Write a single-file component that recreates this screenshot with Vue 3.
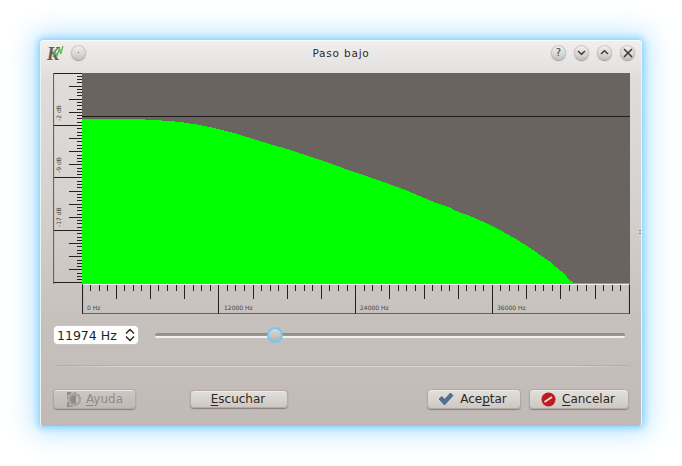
<script setup>
import { computed } from 'vue'

const hz = 11974
const maxHz = 47000
const handleLeft = computed(() => (hz / maxHz) * 100 + '%')

// Samples of the response curve, in chart coordinates (x from 82, y from 73)
const samples = [[0,46],[50,46],[80,47.5],[108,50.5],[148,59],[188,71],[218,80.5],[268,97.5],[318,115],[368,134.5],[388,143],[408,152],[428,162.7],[448,175],[468,188.7],[481,199.7],[491.5,209.7]]
function smooth(pts) {
  const out = []
  for (let i = 0; i < pts.length - 1; i++) {
    const p0 = pts[Math.max(i - 1, 0)]
    const p1 = pts[i]
    const p2 = pts[i + 1]
    const p3 = pts[Math.min(i + 2, pts.length - 1)]
    const n = Math.max(1, Math.round(p2[0] - p1[0]))
    for (let k = 0; k < n; k++) {
      const t = k / n
      const h = (a, b, c, d) => 0.5 * (2 * b + (c - a) * t + (2 * a - 5 * b + 4 * c - d) * t * t + (3 * b - a - 3 * c + d) * t * t * t)
      out.push([p1[0] + (p2[0] - p1[0]) * t, Math.max(46, h(p0[1], p1[1], p2[1], p3[1]))])
    }
  }
  out.push(pts[pts.length - 1])
  return out
}
const curvePoints = smooth(samples).concat([[548, 209.7], [548, 211], [0, 211]]).map(p => `${p[0]},${p[1].toFixed(1)}`).join(' ')

const leftTicks = []
for (let i = 0; i <= 64; i++) {
  const y = Math.floor(i * 3.281) + 0.5
  if (i % 16 === 0) leftTicks.push({ y, x1: 1, w: 1.2 })
  else if (i % 4 === 0) leftTicks.push({ y, x1: 16, w: 1 })
  else leftTicks.push({ y, x1: 23.5, w: 1 })
}
const leftLabels = [{ y: 48, t: '-2 dB' }, { y: 100, t: '-9 dB' }, { y: 154, t: '-17 dB' }]

const bottomTicks = []
for (let i = 0; i <= 64; i++) {
  const x = Math.floor(i * 8.55) + 0.5
  if (i % 16 === 0) bottomTicks.push({ x, h: 29 })
  else if (i % 4 === 0) bottomTicks.push({ x, h: 14 })
  else bottomTicks.push({ x, h: 6 })
}
const bottomLabels = [{ x: 5, t: '0 Hz' }, { x: 142, t: '12000 Hz' }, { x: 278, t: '24000 Hz' }, { x: 415, t: '36000 Hz' }]
</script>

<template>
  <div class="desktop">
    <div class="window">
      <header class="titlebar">
        <div class="tb-left">
          <span class="logo">
            <span class="logo-k">K</span>
            <svg class="logo-wave" width="12" height="14" viewBox="0 0 12 14">
              <path d="M1 12 L3 6 L5 11 L7.5 3 L8.5 9 L11 1" fill="none" stroke="#67b657" stroke-width="1.4" />
            </svg>
          </span>
          <span class="tb-btn"><span class="pin"></span></span>
        </div>
        <div class="title">Paso bajo</div>
        <div class="tb-right">
          <span class="tb-btn"><span class="help">?</span></span>
          <span class="tb-btn">
            <svg width="9" height="9" viewBox="0 0 9 9"><path d="M1 3 L4.5 6.2 L8 3" fill="none" stroke="#3c3a38" stroke-width="1.5" /></svg>
          </span>
          <span class="tb-btn">
            <svg width="9" height="9" viewBox="0 0 9 9"><path d="M1 6 L4.5 2.8 L8 6" fill="none" stroke="#3c3a38" stroke-width="1.5" /></svg>
          </span>
          <span class="tb-btn">
            <svg width="10" height="10" viewBox="0 0 10 10"><path d="M1 1 L9 9 M9 1 L1 9" fill="none" stroke="#3c3a38" stroke-width="1.6" /></svg>
          </span>
        </div>
      </header>

      <main class="content">
        <div class="chart">
          <svg class="ruler-left" width="29" height="211" viewBox="0 0 29 211">
            <line x1="0.5" y1="0" x2="0.5" y2="211" stroke="#6a6460" stroke-width="1.2" />
            <line v-for="t in leftTicks" :key="t.y" :x1="t.x1" :y1="t.y" x2="29" :y2="t.y" stroke="#24211f" :stroke-width="t.w" shape-rendering="crispEdges" />
            <text v-for="l in leftLabels" :key="l.t" class="tiny" :transform="`translate(8 ${l.y}) rotate(-90)`">{{ l.t }}</text>
          </svg>
          <svg class="plot" width="548" height="211" viewBox="0 0 548 211">
            <rect width="548" height="211" fill="#6a6460" />
            <polygon :points="curvePoints" fill="#00ff00" shape-rendering="crispEdges" />
            <line x1="0" y1="43.5" x2="548" y2="43.5" stroke="#1f1c1a" shape-rendering="crispEdges" />
          </svg>
          <svg class="ruler-bottom" width="548" height="30" viewBox="0 0 548 30">
            <line x1="0" y1="0.5" x2="548" y2="0.5" stroke="#f4f2f0" />
            <path d="M0.5 0 V29.5 H547.5 V0" fill="none" stroke="#6a6460" stroke-width="1.2" />
            <line v-for="t in bottomTicks" :key="t.x" :x1="t.x" y1="1" :x2="t.x" :y2="1 + t.h" stroke="#24211f" shape-rendering="crispEdges" />
            <text v-for="l in bottomLabels" :key="l.t" class="tiny" :x="l.x" y="26">{{ l.t }}</text>
          </svg>
        </div>

        <div class="control-row">
          <div class="spin">
            <span>{{ hz }} Hz</span>
            <svg width="12" height="14" viewBox="0 0 12 14">
              <path d="M2 5.5 L6 1.5 L10 5.5 M2 8.5 L6 12.5 L10 8.5" fill="none" stroke="#2b2826" stroke-width="1.5" />
            </svg>
          </div>
          <div class="slider">
            <div class="groove"></div>
            <div class="handle" :style="{ left: handleLeft }"></div>
          </div>
        </div>

        <div class="separator"></div>

        <footer class="buttons">
          <button class="btn disabled ayuda" disabled>
            <svg width="17" height="17" viewBox="0 0 17 17">
              <rect x="1" y="1" width="9" height="15" fill="#8f8a86" />
              <circle cx="8.5" cy="8.5" r="5.5" fill="none" stroke="#a8a4a0" stroke-width="3" />
              <circle cx="8.5" cy="8.5" r="7.2" fill="none" stroke="#d2cecb" stroke-width="1" stroke-dasharray="3 2" />
            </svg>
            <span><u>A</u>yuda</span>
          </button>
          <button class="btn escuchar"><span><u>E</u>scuchar</span></button>
          <span class="spacer"></span>
          <button class="btn aceptar">
            <svg width="16" height="14" viewBox="0 0 16 14">
              <path d="M1 7 L4 4.5 L6.5 7.5 L12.5 1 L15 3.5 L6.5 13 Z" fill="#4f7296" stroke="#3a5674" stroke-width="0.7" />
            </svg>
            <span>Ace<u>p</u>tar</span>
          </button>
          <button class="btn cancelar">
            <svg width="15" height="15" viewBox="0 0 15 15">
              <circle cx="7.5" cy="7.5" r="7" fill="#bb1c1e" />
              <path d="M3.5 10 L11 5" stroke="#f2d8d8" stroke-width="2" />
            </svg>
            <span><u>C</u>ancelar</span>
          </button>
        </footer>
      </main>
      <span class="grip"></span>
    </div>
  </div>
</template>

<style>
html, body { background: #ffffff; }
</style>

<style scoped>
.desktop {
  box-sizing: border-box;
  width: 682px;
  height: 466px;
  padding: 40px 0 0 40px;
  overflow: hidden;
}
.window {
  position: relative;
  box-sizing: border-box;
  width: 602px;
  height: 386px;
  border-radius: 4px 4px 3px 3px;
  border-top: 1px solid #fbfbfb;
  border-left: 1px solid #f2f1f0;
  border-right: 1px solid #f4f3f2;
  background: linear-gradient(180deg, #f0efed 0%, #dfdddb 10%, #d6d2cf 40%, #c7c1bd 72%, #c1b9b5 100%);
  box-shadow: 0 0 6px 2px rgba(125, 210, 255, .95), 0 0 26px 8px rgba(150, 215, 255, .6);
  font-family: "DejaVu Sans", sans-serif;
  color: #2a2725;
}
.titlebar {
  display: grid;
  grid-template-columns: 1fr auto 1fr;
  align-items: center;
  height: 32px;
  padding: 0 6px 9px 6px;
  box-sizing: border-box;
}
.tb-left { display: flex; align-items: center; gap: 8px; }
.tb-right { display: flex; align-items: center; justify-content: flex-end; gap: 8px; }
.logo { position: relative; display: block; width: 16px; height: 15px; }
.logo-k {
  font: italic bold 18px/15px "Liberation Serif", serif;
  color: #5e5b58;
}
.logo-wave { position: absolute; left: 5px; top: 0; }
.title { font-size: 10.5px; letter-spacing: 0.8px; color: #2c2a28; }
.tb-btn {
  display: flex;
  align-items: center;
  justify-content: center;
  width: 15px;
  height: 15px;
  border-radius: 50%;
  background: linear-gradient(180deg, #f2f1f0 0%, #dad8d6 60%, #c2c0be 100%);
  box-shadow: 0 1px 1px rgba(90, 85, 80, .55), inset 0 0 0 1px rgba(190, 187, 184, .7);
}
.pin { width: 1.5px; height: 1.5px; border-radius: 50%; background: #55524f; }
.help { font-size: 10px; line-height: 10px; color: #3c3a38; }
.content { padding: 0 11px 0 12px; }
.chart {
  display: grid;
  grid-template-columns: 29px 548px;
  grid-template-rows: 211px 30px;
}
.chart svg { display: block; }
.ruler-bottom { grid-column: 2; }
.tiny {
  font-family: "DejaVu Sans", sans-serif;
  font-size: 6px;
  fill: #4a4541;
}
.control-row {
  display: flex;
  align-items: center;
  margin-top: 12px;
  height: 18px;
}
.spin {
  display: flex;
  align-items: center;
  justify-content: space-between;
  box-sizing: border-box;
  width: 84px;
  height: 18px;
  margin-left: 1px;
  padding: 0 2px 0 3px;
  border-radius: 4px;
  background: #ffffff;
  box-shadow: 0 0 0 1px #c9c5c1;
  font-size: 12.5px;
  color: #221f1d;
  white-space: nowrap;
}
.slider {
  position: relative;
  flex: 1;
  height: 18px;
  margin: 0 5px 0 17px;
}
.groove {
  position: absolute;
  left: 0;
  right: 0;
  top: 7px;
  height: 5px;
  border-radius: 3px;
  background: linear-gradient(180deg, #918985 0%, #a0978f 55%, #f3f1ef 65%, #f3f1ef 100%);
}
.handle {
  position: absolute;
  top: 1px;
  box-sizing: border-box;
  width: 16px;
  height: 16px;
  margin-left: -8px;
  border-radius: 50%;
  border: 2px solid #6ccafa;
  background: linear-gradient(180deg, #dcdad7 0%, #b8b3ae 100%);
}
.separator {
  height: 1px;
  margin: 22px 0 0 2px;
  background: linear-gradient(90deg, rgba(225, 221, 218, 0) 0%, #dcd8d5 12%, #dcd8d5 90%, rgba(225, 221, 218, 0) 100%);
  box-shadow: 0 -1px 0 rgba(165, 157, 152, .5);
}
.buttons {
  display: flex;
  align-items: center;
  margin-top: 22px;
  height: 20px;
}
.spacer { flex: 1; }
.btn {
  display: flex;
  align-items: center;
  justify-content: center;
  gap: 7px;
  box-sizing: border-box;
  height: 20px;
  padding: 0;
  border: 1px solid #b1aaa5;
  border-radius: 4px;
  background: linear-gradient(180deg, #e3e0dc 0%, #cdc8c2 100%);
  box-shadow: 0 1px 1px rgba(85, 80, 76, .55), inset 0 1px 0 #eeecea;
  font-family: "DejaVu Sans", sans-serif;
  font-size: 12px;
  color: #2a2725;
}
.btn u { text-underline-offset: 2px; }
.ayuda { width: 83px; gap: 3px; background: linear-gradient(180deg, #cdc7c3 0%, #c0bab6 100%); color: #8f8a86; }
.escuchar { width: 98px; height: 18px; margin-left: 54px; padding-right: 2px; }
.aceptar { width: 94px; gap: 6px; padding-right: 3px; }
.cancelar { width: 100px; margin: 0 1px 0 8px; gap: 6px; padding-right: 2px; }
.grip {
  position: absolute;
  right: 0;
  top: 189px;
  width: 2px;
  height: 6px;
  background: repeating-linear-gradient(180deg, #8c8682 0 1px, transparent 1px 3px);
}
</style>
